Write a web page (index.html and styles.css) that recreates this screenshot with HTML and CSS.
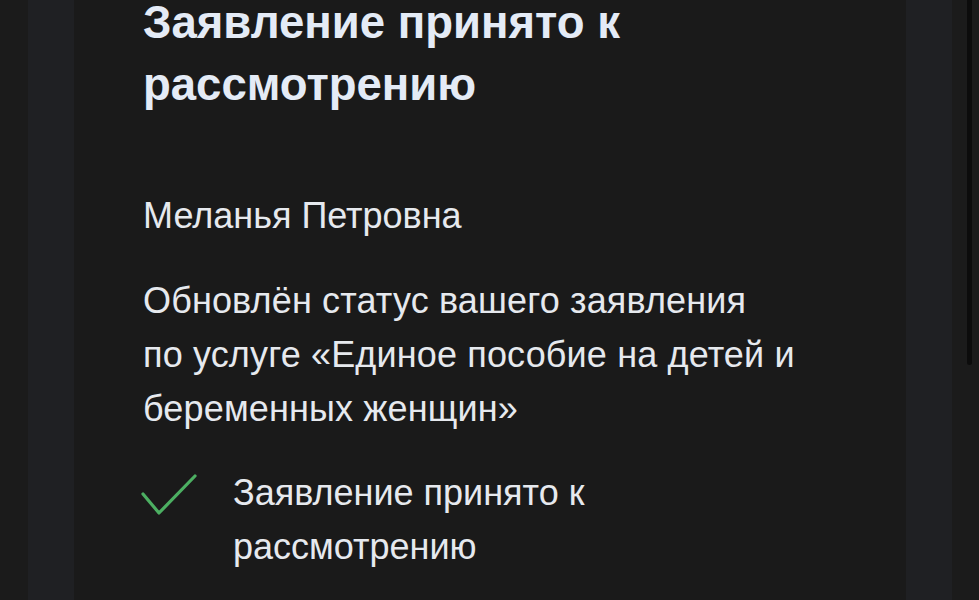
FILE: index.html
```html
<!DOCTYPE html>
<html lang="ru">
<head>
<meta charset="utf-8">
<link rel="stylesheet" href="styles.css">
</head>
<body>
<div class="page">
  <div class="edge"></div>
  <div class="gutter"></div>
  <main class="card">
    <h1 class="title">Заявление принято к<br>рассмотрению</h1>
    <p class="name">Меланья Петровна</p>
    <p class="text">Обновлён статус вашего заявления<br>по услуге «Единое пособие на детей и<br>беременных женщин»</p>
    <div class="status">
      <svg class="check" width="57" height="43" viewBox="0 0 57 43" aria-hidden="true">
        <path d="M2 21 L18 40 L54 3" fill="none" stroke="#4caf62" stroke-width="3.2" stroke-linecap="round" stroke-linejoin="round"/>
      </svg>
      <span class="status-text">Заявление принято к<br>рассмотрению</span>
    </div>
  </main>
  <div class="gutter"></div>
  <div class="edge edge-right"><div class="thumb"></div></div>
</div>
</body>
</html>
```
FILE: styles.css
```css
html, body {
  margin: 0;
  padding: 0;
  background: #1a1a1a;
  overflow: hidden;
}
.page {
  display: flex;
  height: 600px;
  font-family: "Liberation Sans", Arial, sans-serif;
}
.edge {
  width: 28px;
  background: #1b1b1b;
}
.edge-right {
  width: 27px;
  position: relative;
}
.thumb {
  position: absolute;
  left: 15px;
  top: 0;
  width: 5px;
  height: 365px;
  border-radius: 0 0 3px 3px;
  background: #0c0c0c;
}
.gutter {
  width: 46px;
  background: #1f2023;
}
.card {
  flex: 1;
  background: #1a1a1a;
  padding-left: 69px;
}
.title {
  margin: -8px 0 0 0;
  font-size: 45.5px;
  line-height: 62px;
  font-weight: 700;
  color: #e4ebf6;
}
.name {
  margin: 0;
  padding-top: 73px;
  font-size: 36px;
  line-height: 54px;
  color: #e6e9ee;
}
.text {
  margin: 0;
  padding-top: 31px;
  font-size: 36px;
  line-height: 54px;
  letter-spacing: 0.15px;
  color: #e6e9ee;
}
.status {
  display: flex;
  align-items: flex-start;
  gap: 35px;
  margin-top: 30px;
}
.check {
  flex: none;
  margin: 7px 0 0 -2px;
}
.status-text {
  font-size: 36px;
  line-height: 54px;
  color: #e6e9ee;
}
```
